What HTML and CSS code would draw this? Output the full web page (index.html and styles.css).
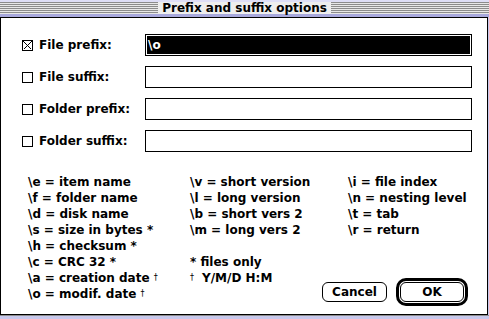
FILE: index.html
```html
<!DOCTYPE html>
<html>
<head>
<meta charset="utf-8">
<title>Prefix and suffix options</title>
<link rel="stylesheet" href="styles.css">
</head>
<body>
<div class="window">
  <div class="titlebar">
    <div class="stripes"></div>
    <div class="title">Prefix and suffix options</div>
    <div class="stripes"></div>
  </div>
  <div class="content">
    <div class="fields">
      <div class="row">
        <div class="check"><span class="box"><svg width="11" height="11" viewBox="0 0 11 11"><path d="M1.5 1.5 L9.5 9.5 M9.5 1.5 L1.5 9.5" stroke="#000" stroke-width="1" fill="none" shape-rendering="crispEdges"/></svg></span>File prefix:</div>
        <div class="field selected"><span class="sel">\o</span></div>
      </div>
      <div class="row">
        <div class="check"><span class="box"></span>File suffix:</div>
        <div class="field"></div>
      </div>
      <div class="row">
        <div class="check"><span class="box"></span>Folder prefix:</div>
        <div class="field"></div>
      </div>
      <div class="row">
        <div class="check"><span class="box"></span>Folder suffix:</div>
        <div class="field"></div>
      </div>
    </div>
    <div class="legend">
      <div class="col1">
        <div class="line">\e = item name</div>
        <div class="line">\f = folder name</div>
        <div class="line">\d = disk name</div>
        <div class="line">\s = size in bytes *</div>
        <div class="line">\h = checksum *</div>
        <div class="line">\c = CRC 32 *</div>
        <div class="line">\a = creation date <span class="dag">†</span></div>
        <div class="line">\o = modif. date <span class="dag">†</span></div>
      </div>
      <div class="rest">
        <div class="grid2">
          <div class="line">\v = short version</div>
          <div class="line">\i = file index</div>
          <div class="line">\l = long version</div>
          <div class="line">\n = nesting level</div>
          <div class="line">\b = short vers 2</div>
          <div class="line">\t = tab</div>
          <div class="line">\m = long vers 2</div>
          <div class="line">\r = return</div>
        </div>
        <div class="bottomrow">
          <div class="notes">
            <div class="line">* files only</div>
            <div class="line"><span class="dag lead">†</span>Y/M/D H:M</div>
          </div>
          <div class="buttons">
            <div class="btn">Cancel</div>
            <div class="ring"><div class="btn">OK</div></div>
          </div>
        </div>
      </div>
    </div>
  </div>
  <div class="bottom"></div>
</div>
</body>
</html>
```

FILE: styles.css
```css
html, body {
  margin: 0;
  padding: 0;
  background: #ffffff;
}

body {
  font-family: "DejaVu Sans", "Noto Sans", sans-serif;
  font-weight: bold;
  font-size: 12px;
  color: #000;
}

.window {
  width: 489px;
  height: 319px;
  display: flex;
  flex-direction: column;
  background: #c8c8ec;
}

.titlebar {
  height: 17px;
  box-sizing: border-box;
  border-top: 2px solid #dedef6;
  border-bottom: 3px solid #a8a8dc;
  display: flex;
  background: #e8e8e8;
}

.stripes {
  flex: 1;
  background: repeating-linear-gradient(to bottom, #8c8c8c 0 1px, #e8e8e8 1px 2px);
}

.title {
  padding: 0 4px;
  line-height: 12px;
  height: 12px;
  background: #eeeeee;
  white-space: nowrap;
}

.content {
  width: 488px;
  height: 298px;
  box-sizing: border-box;
  border: 1px solid #000;
  background: #fff;
  display: flex;
  flex-direction: column;
}

.fields {
  padding: 16px 0 0 21px;
  display: flex;
  flex-direction: column;
  gap: 10px;
}

.row {
  display: grid;
  grid-template-columns: 123px 327px;
  align-items: center;
  height: 22px;
}

.check {
  display: flex;
  align-items: center;
  gap: 6px;
  white-space: nowrap;
}

.box {
  width: 11px;
  height: 11px;
  box-sizing: border-box;
  border: 1px solid #000;
  display: block;
  overflow: visible;
}

.box svg {
  display: block;
  margin: -1px;
}

.field {
  height: 22px;
  box-sizing: border-box;
  border: 1px solid #000;
}

.field.selected {
  padding: 1px;
  display: flex;
}

.sel {
  flex: 1;
  background: #000;
  color: #fff;
  padding-left: 1px;
  line-height: 18px;
}

.legend {
  margin-top: 22px;
  padding: 0 19px 0 27px;
  display: flex;
}

.line {
  height: 16px;
  line-height: 16px;
  white-space: nowrap;
}

.col1 {
  width: 162px;
  flex: none;
}

.rest {
  flex: 1;
  display: flex;
  flex-direction: column;
}

.grid2 {
  display: grid;
  grid-template-columns: 158px auto;
  margin-bottom: 16px;
}

.bottomrow {
  display: flex;
  align-items: flex-start;
}

.dag {
  font-size: 8px;
  vertical-align: 2px;
  font-weight: normal;
}

.dag.lead {
  margin-right: 8px;
}

.buttons {
  margin-left: auto;
  margin-top: 24px;
  display: flex;
  align-items: center;
  gap: 9px;
}

.btn {
  width: 65px;
  height: 20px;
  box-sizing: border-box;
  border: 1px solid #000;
  border-radius: 6px;
  background: #fff;
  text-align: center;
  line-height: 18px;
}

.ring {
  border: 3px solid #000;
  border-radius: 10px;
  padding: 1px;
  background: #fff;
}

.ring .btn {
  width: 64px;
}

.bottom {
  flex: 1;
  border-top: 1px solid #8c8c8c;
  background: #c8c8ec;
}
```
